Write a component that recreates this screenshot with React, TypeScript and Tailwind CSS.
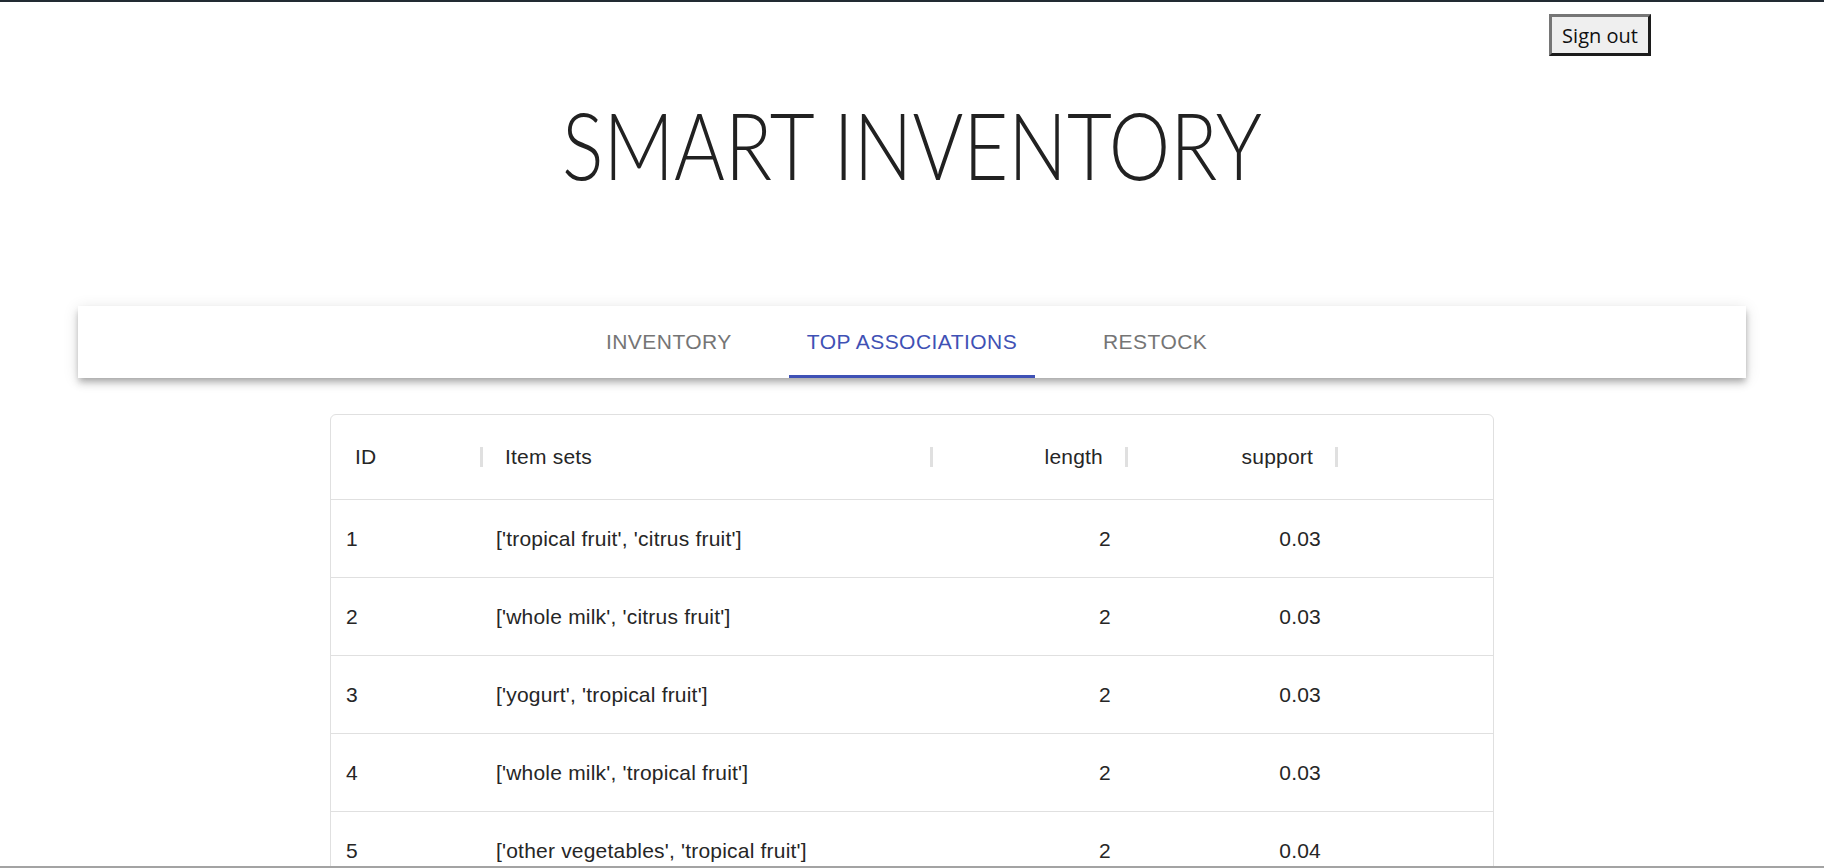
import { useState } from 'react';

const TABS = ['Inventory', 'Top associations', 'Restock'];

const ROWS = [
  { id: 1, items: "['tropical fruit', 'citrus fruit']", length: 2, support: '0.03' },
  { id: 2, items: "['whole milk', 'citrus fruit']", length: 2, support: '0.03' },
  { id: 3, items: "['yogurt', 'tropical fruit']", length: 2, support: '0.03' },
  { id: 4, items: "['whole milk', 'tropical fruit']", length: 2, support: '0.03' },
  { id: 5, items: "['other vegetables', 'tropical fruit']", length: 2, support: '0.04' },
];

function Separator() {
  return <div className="ml-auto -mr-[2px] w-[3px] h-[20px] bg-[#e0e0e0]" />;
}

export default function App() {
  const [tab, setTab] = useState(1);

  return (
    <div className="h-screen overflow-hidden flex flex-col bg-white border-t-2 border-t-[#222b33] border-b-2 border-b-[#a3a3a3]">
      {/* Top bar */}
      <div className="shrink-0 flex justify-end pr-[173px] pt-[12px]">
        <button
          className="w-[102px] h-[42px] pt-[1px] bg-[#efefef] border-[3px] border-t-[#767676] border-l-[#767676] border-b-[#1c1c1c] border-r-[#1c1c1c] text-[20px] text-[#111]"
          style={{ fontFamily: '"Open Sans", "Noto Sans", sans-serif' }}
        >
          Sign out
        </button>
      </div>

      {/* Title */}
      <h1 className="shrink-0 mt-[42px] text-center text-[93px] leading-none font-light scale-x-[0.835] text-[#212121] font-['Lato',sans-serif]">
        SMART INVENTORY
      </h1>

      {/* Tabs */}
      <div className="shrink-0 mt-[115px] mx-[78px] h-[72px] bg-white flex justify-center shadow-[0_3px_6px_-1.5px_rgba(0,0,0,0.2),0_6px_7.5px_0_rgba(0,0,0,0.14),0_1.5px_15px_0_rgba(0,0,0,0.12)] font-['Liberation_Sans',Arial,sans-serif]">
        {TABS.map((label, i) => (
          <button
            key={label}
            onClick={() => setTab(i)}
            className={
              'relative min-w-[240px] px-[18px] h-full flex items-center justify-center text-[21px] uppercase tracking-[0.45px] ' +
              (tab === i ? 'text-[#3f51b5]' : 'text-[#757575]')
            }
          >
            {label}
            {tab === i && <span className="absolute left-0 right-0 bottom-0 h-[3px] bg-[#3f51b5]" />}
          </button>
        ))}
      </div>

      {/* Data grid */}
      <div className="shrink-0 mt-[36px] mx-auto w-[1164px] border border-[#e0e0e0] rounded-[6px] text-[21px] tracking-[0.2px] text-[#262626] font-['Liberation_Sans',Arial,sans-serif]">
        <div className="grid grid-cols-[150px_450px_195px_210px_1fr] h-[85px] border-b border-[#e0e0e0]">
          <div className="flex items-center pl-[24px]">
            ID
            <Separator />
          </div>
          <div className="flex items-center pl-[24px]">
            Item sets
            <Separator />
          </div>
          <div className="flex items-center justify-end">
            <span className="mr-[22px]">length</span>
            <div className="-mr-[2px] w-[3px] h-[20px] bg-[#e0e0e0]" />
          </div>
          <div className="flex items-center justify-end">
            <span className="mr-[22px]">support</span>
            <div className="-mr-[2px] w-[3px] h-[20px] bg-[#e0e0e0]" />
          </div>
          <div />
        </div>
        {ROWS.map((r) => (
          <div key={r.id} className="grid grid-cols-[150px_450px_195px_210px_1fr] h-[78px] border-b border-[#e0e0e0]">
            <div className="flex items-center px-[15px]">{r.id}</div>
            <div className="flex items-center px-[15px]">{r.items}</div>
            <div className="flex items-center justify-end px-[15px]">{r.length}</div>
            <div className="flex items-center justify-end px-[15px]">{r.support}</div>
            <div />
          </div>
        ))}
      </div>
    </div>
  );
}
